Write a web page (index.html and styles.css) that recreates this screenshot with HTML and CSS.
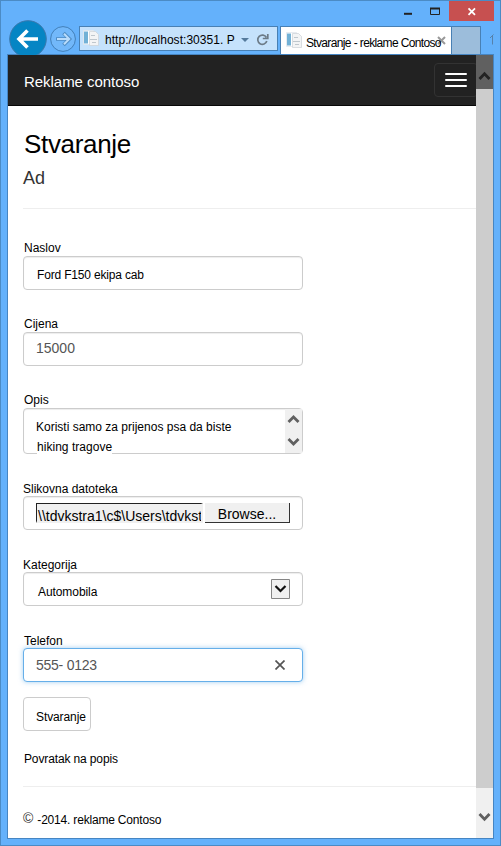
FILE: index.html
```html
<!DOCTYPE html>
<html lang="hr">
<head>
<meta charset="utf-8">
<title>Stvaranje - reklame Contoso</title>
<link rel="stylesheet" href="styles.css">
</head>
<body>
<div class="window">
  <header class="titlebar">
    <svg class="caption" width="45" height="20"><path d="M0 12.8h8" stroke="#222" stroke-width="2"/><path d="M26.5 7.500h9v6h-9z" fill="none" stroke="#222"/><path d="M26 7.500h10" stroke="#222" stroke-width="2"/></svg>
    <div class="close"><svg width="45" height="20"><path d="M19.500 7.300l6.500 6.500M26 7.300l-6.500 6.500" stroke="#fff" stroke-width="1.800"/></svg></div>
  </header>
  <div class="toolbar">
    <svg class="nav-buttons" width="69" height="36">
      <circle cx="20" cy="20" r="18.300" fill="#0585c4" stroke="#3b78ad"/>
      <path d="M30 20H12M19.500 11.500L11 20l8.500 8.500" fill="none" stroke="#fff" stroke-width="3.600"/>
      <circle cx="55" cy="20" r="12.400" fill="#72b8fa" stroke="#427fb8"/>
      <path d="M48 20h13M55.500 14l6 6-6 6" fill="none" stroke="#4d8bc3" stroke-width="3.600"/>
      <path d="M49 20h12M56 14.700l5.200 5.300-5.200 5.300" fill="none" stroke="#b9dcfb" stroke-width="2"/>
    </svg>
    <div class="address">
      <svg class="page-icon" width="17" height="17"><path d="M.5.5h10v14H.5z" fill="#fff" stroke="#dce3e9" stroke-width=".7"/><path d="M1 1.500h4v12H1z" fill="#72b1d6"/><path d="M6.500 1.500h6l3 3v11h-9z" fill="#f3f4f5" stroke="#cbd1d6" stroke-width=".7"/><path d="M8 5.500h4M7 9.500h7M9 12.500h4" stroke="#bfc7cd"/></svg>
      <span class="url">http://localhost:30351. P</span>
      <svg class="address-tools" width="36" height="22"><path d="M3 10h8l-4 4z" fill="#557a9c"/><path d="M28.400 9.500a4.600 4.600 0 1 0 .4 3.500M29.800 6v4.500h-5" fill="none" stroke="#6c7b88" stroke-width="1.700"/></svg>
    </div>
    <div class="tab">
      <svg class="page-icon" width="17" height="17"><path d="M.5.5h10v14H.5z" fill="#fff" stroke="#dce3e9" stroke-width=".7"/><path d="M1 1.500h4v12H1z" fill="#72b1d6"/><path d="M6.500 1.500h6l3 3v11h-9z" fill="#f3f4f5" stroke="#cbd1d6" stroke-width=".7"/><path d="M8 5.500h4M7 9.500h7M9 12.500h4" stroke="#bfc7cd"/></svg>
      <span class="tab-title">Stvaranje - reklame Contoso</span>
      <svg class="tab-close" width="9" height="9"><path d="M1 1l7 7M8 1l-7 7" stroke="#999" stroke-width="2"/></svg>
    </div>
    <div class="new-tab"></div>
    <svg class="home" width="13" height="28"><path d="M9 12l3.500-3.500M11.500 9.500v9" stroke="#5681ab" fill="none"/></svg>
  </div>
  <div class="viewport">
    <div class="page">
      <nav class="navbar">
        <span class="brand">Reklame contoso</span>
        <div class="menu"><i></i><i></i><i></i></div>
      </nav>
      <main>
        <h1>Stvaranje</h1>
        <h2>Ad</h2>
        <hr>
        <form>
          <div class="group"><label>Naslov</label><div class="control"><span class="small title-value">Ford F150 ekipa cab</span></div></div>
          <div class="group"><label>Cijena</label><div class="control"><span class="typed">15000</span></div></div>
          <div class="group"><label>Opis</label>
            <div class="control area">
              <div class="copy"><span>Koristi samo za prijenos psa da biste</span><br><span class="line-two">hiking tragove</span></div>
              <svg width="17" height="44"><path d="M0 0h17v44H0z" fill="#f0f0f0"/><path d="M3.500 13l5-5 5 5M3.500 30l5 5 5-5" fill="none" stroke="#606060" stroke-width="2.800"/></svg>
            </div>
          </div>
          <div class="group"><label class="flush">Slikovna datoteka</label><div class="control file"><span class="path">\\tdvkstra1\c$\Users\tdvkst</span><span class="browse">Browse...</span></div></div>
          <div class="group"><label class="flush">Kategorija</label><div class="control select"><span class="small category">Automobila</span><svg width="19" height="20"><path d="M.5.5h18v19H.5z" fill="#f0f0f0" stroke="#858585"/><path d="M4.500 7l5 5 5-5" fill="none" stroke="#111" stroke-width="2.200"/></svg></div></div>
          <div class="group"><label class="lowered">Telefon</label><div class="control focused"><span class="typed phone">555- 0123</span><svg width="10" height="10"><path d="M.5.5l9 9M9.500.5l-9 9" stroke="#555" stroke-width="1.700"/></svg></div></div>
          <div class="submit">Stvaranje</div>
        </form>
        <a class="back">Povratak na popis</a>
        <hr class="foot-rule">
        <footer><span class="copyright">©</span><span class="foot-text">-2014. reklame Contoso</span></footer>
      </main>
    </div>
    <div class="scrollbar">
      <svg width="17" height="34"><path d="M0 0h17v34H0z" fill="#606060"/><path d="M3.500 24l5-5.300 5 5.300" fill="none" stroke="#222" stroke-width="2.800"/></svg>
      <div class="thumb"></div>
      <svg width="17" height="50"><path d="M3.500 26l5 5.300 5-5.300" fill="none" stroke="#606060" stroke-width="2.800"/></svg>
    </div>
  </div>
</div>
</body>
</html>
```
FILE: styles.css
```css
* { box-sizing: border-box; }
body { margin: 0; font-family: "Liberation Sans", Arial, sans-serif; font-size: 12px; color: #000; }
svg { display: block; flex: none; }
span { white-space: nowrap; }
.window { width: 501px; height: 846px; background: #64b1fb; border: 1px solid #4b8bc5; overflow: hidden; }
.titlebar { display: flex; justify-content: flex-end; height: 18px; padding-right: 6px; }
.close { width: 45px; height: 20px; background: #c75050; }
.toolbar { display: flex; height: 35px; padding-left: 7px; }
.nav-buttons { margin-right: 2px; }
.address { display: flex; width: 199px; height: 25px; margin-top: 7px; padding: 3px; border: 1px solid #4880b4; background: #c5e2fc; }
.page-icon { flex: none; }
.url { width: 139px; margin-left: 5px; line-height: 21px; letter-spacing: .04px; }
.address .address-tools { margin-top: -2px; }
.tab { position: relative; display: flex; width: 172px; height: 28px; margin: 7px 0 0 2px; padding: 5px 0 0 5px; background: #fff; border: 1px solid #4880b4; border-bottom: 0; }
.tab-title { position: relative; z-index: 1; margin-left: 3px; line-height: 22px; letter-spacing: -.66px; word-spacing: .2px; }
.tab-close { position: absolute; right: 5px; top: 9px; }
.new-tab { width: 29px; height: 28px; margin-top: 7px; background: #9cbddb; border: 1px solid #4880b4; border-left: 0; border-bottom: 0; }
.home { margin-top: 7px; }
.viewport { display: flex; width: 487px; height: 785px; margin-left: 6px; border: 1px solid #4685c2; background: #fff; }
.page { width: 468px; }
.navbar { display: flex; justify-content: space-between; height: 51px; padding: 8px 0 0 16px; background: #222; border-bottom: 1px solid #080808; color: #fff; font-size: 15px; overflow: hidden; }
.brand { line-height: 37px; letter-spacing: -.04px; }
.menu { display: flex; flex-direction: column; gap: 4px; width: 44px; height: 34px; margin-right: -2px; padding: 9px 10px; border: 1px solid #333; border-radius: 4px; }
.menu i { flex: none; height: 2px; background: #fff; border-radius: 1px; }
main { padding-left: 15px; }
h1, h2 { margin: 0; font-weight: 400; }
h1 { padding: 21px 0 0 1px; font-size: 26px; line-height: 34px; letter-spacing: -.32px; }
h2 { margin-top: 7px; font-size: 18px; line-height: 20px; color: #333; }
hr { height: 1px; margin: 20px 0 31px; border: 0; background: #eee; }
.group { margin-bottom: 26px; }
label { display: block; height: 16px; padding-left: 1px; line-height: 16px; }
.control { display: flex; width: 280px; height: 34px; padding: 0 12px; border: 1px solid #ccc; border-radius: 4px; box-shadow: inset 0 1px 1px rgba(0,0,0,.075); background: #fff; }
.small { padding-left: 1px; line-height: 36px; }
.title-value { letter-spacing: -.17px; }
.category { padding: 1px 0 0 2px; letter-spacing: -.08px; }
.typed { color: #555; font-size: 14px; line-height: 31px; }
.phone { line-height: 33px; letter-spacing: -.25px; }
.area { height: 46px; padding-right: 0; justify-content: space-between; }
.copy { padding-top: 8px; line-height: 20px; }
.line-two { margin-left: 1px; background: #fff; letter-spacing: .03px; }
.file { padding-top: 6px; }
.path { width: 167px; height: 20px; overflow: hidden; border: 2px solid #f0f0f0; border-top: 1px solid #222; border-left: 1px solid #222; background: #f0f0f0; padding-left: 1px; font-size: 14px; line-height: 24px; }
.browse { width: 85px; height: 20px; margin-left: 2px; border-right: 1px solid #333; border-bottom: 1px solid #333; background: #f0f0f0; font-size: 14px; line-height: 22px; text-align: center; }
.flush { padding-left: 0; line-height: 18px; }
.lowered { line-height: 18px; }
.select { justify-content: space-between; }
.select svg { margin-top: 6px; }
.focused { justify-content: space-between; border-color: #66afe9; box-shadow: 0 0 5px rgba(102,175,233,.6); }
.focused svg { margin: 11px 5px 0 0; }
.submit { width: 68px; height: 34px; margin-top: -11px; padding-left: 12px; border: 1px solid #ccc; border-radius: 4px; line-height: 38px; letter-spacing: -.1px; }
.back { display: block; margin-top: 20px; padding-left: 1px; line-height: 16px; letter-spacing: -.13px; }
.foot-rule { margin: 19px 0 22px; }
footer { display: flex; height: 20px; line-height: 18px; }
.copyright { color: #333; font-size: 14px; }
.foot-text { margin: 2px 0 0 4px; letter-spacing: -.19px; }
.scrollbar { display: flex; flex-direction: column; width: 17px; background: #f0f0f0; }
.thumb { height: 699px; background: #cdcdcd; }
```
